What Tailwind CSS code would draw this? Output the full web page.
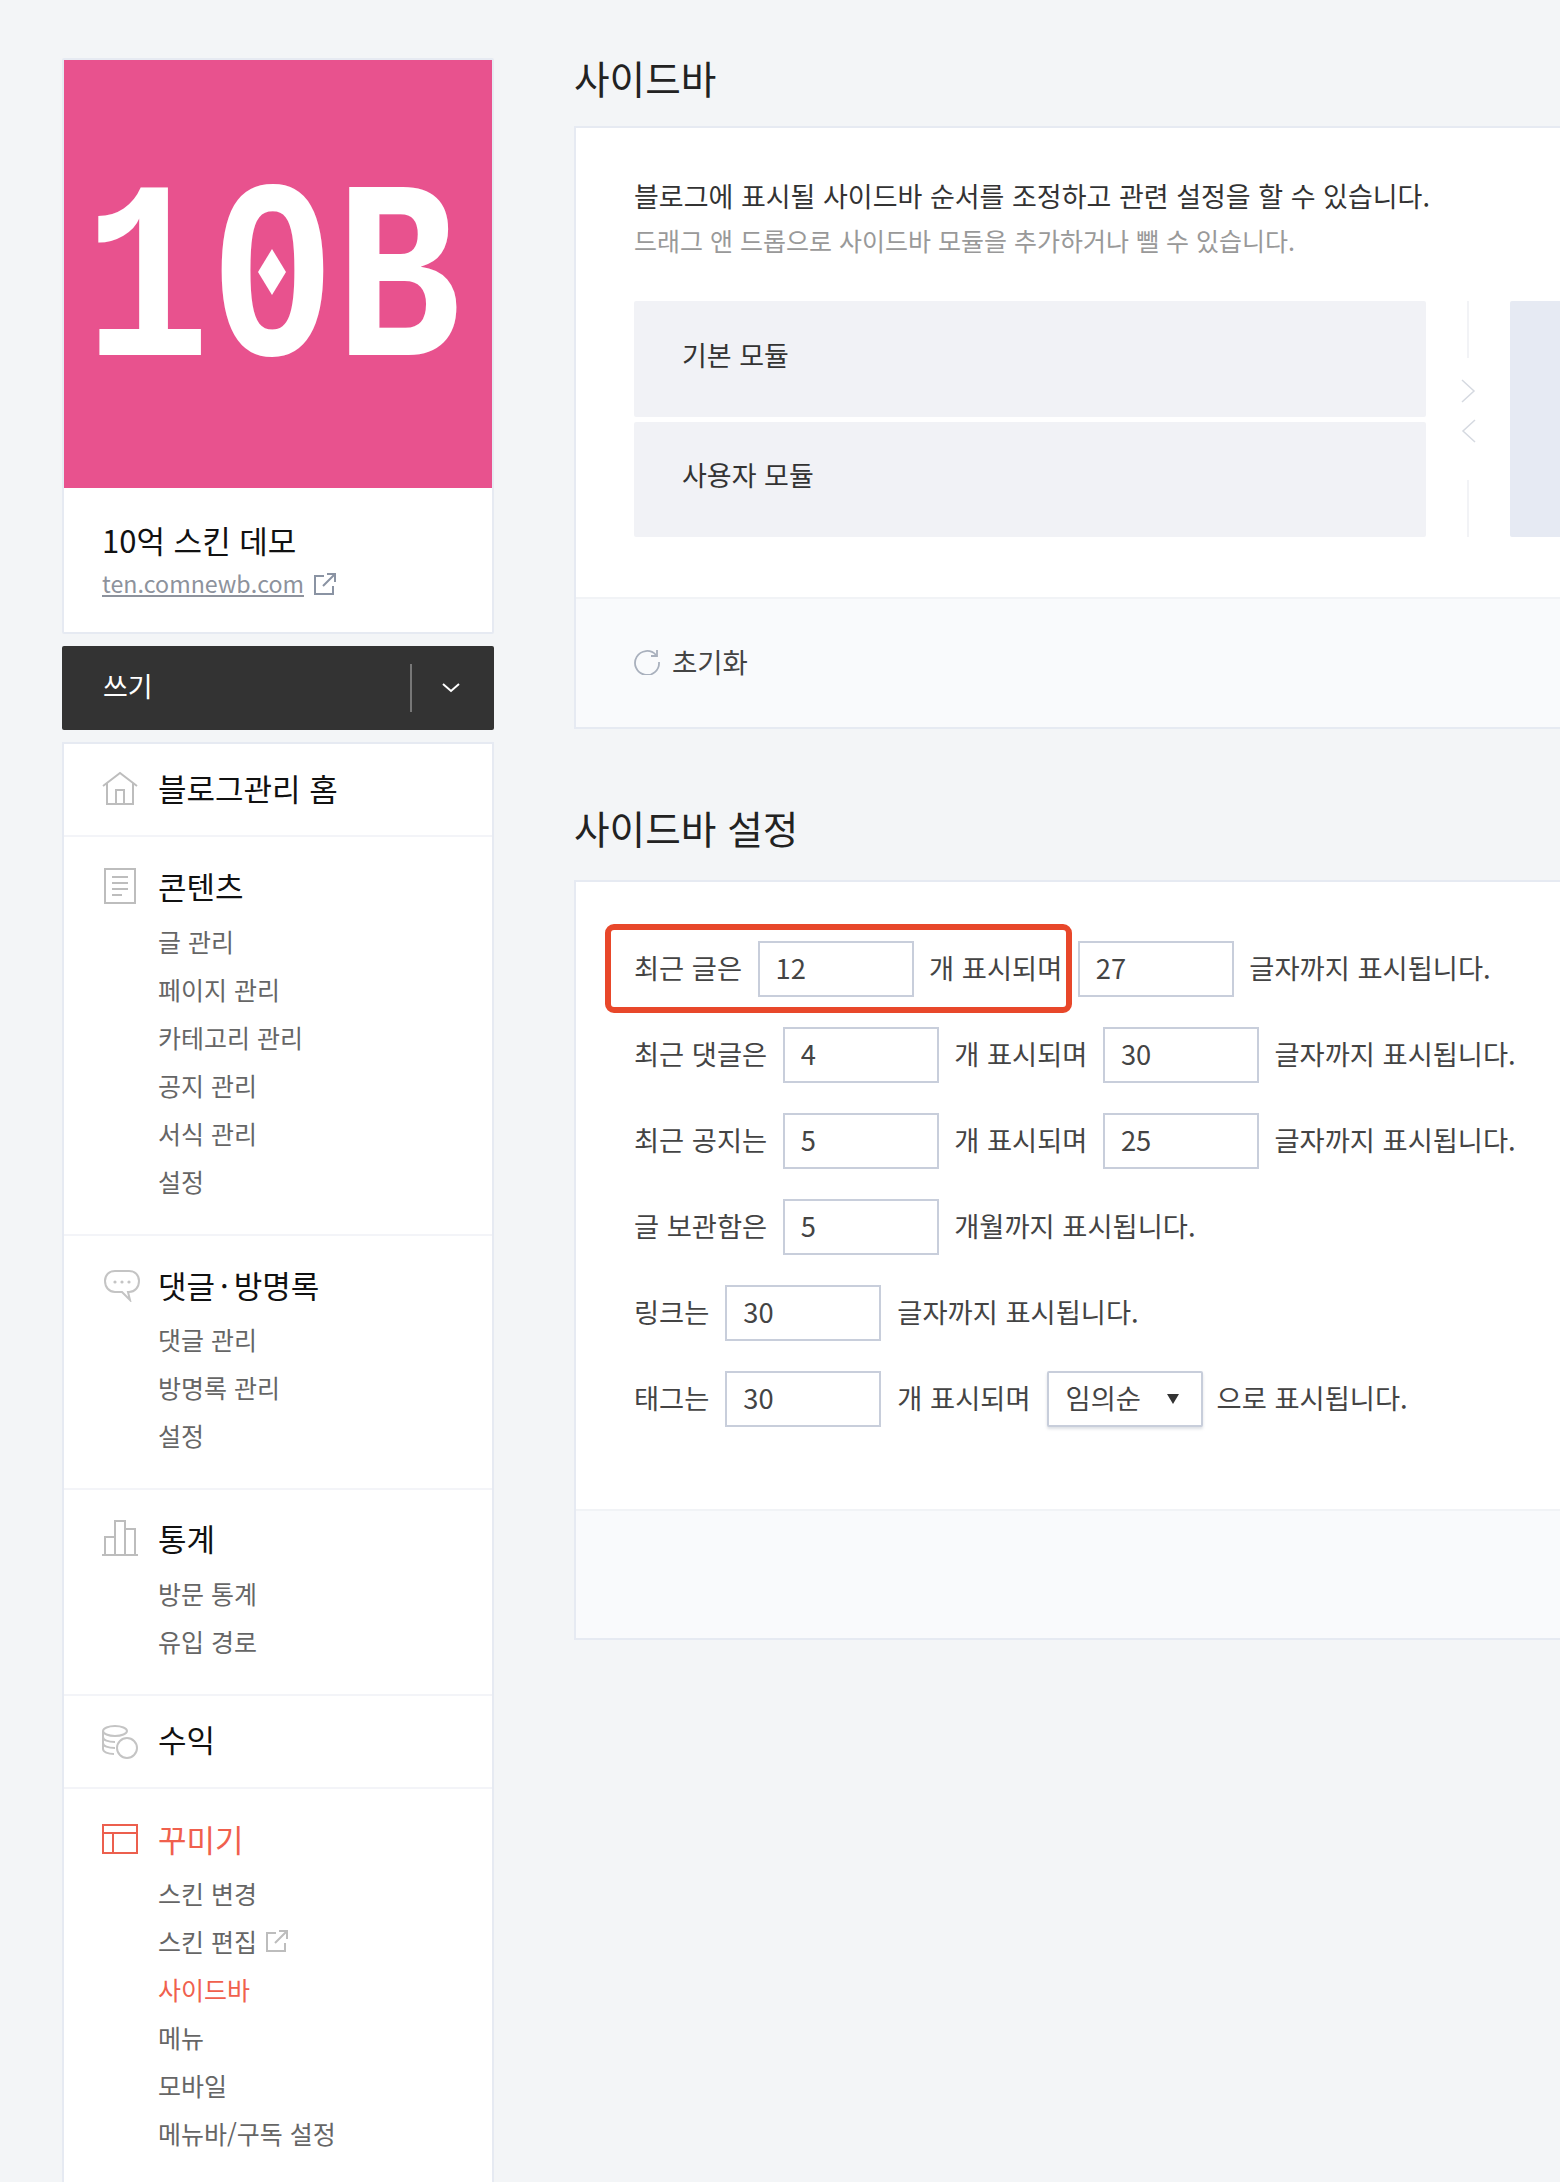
<!DOCTYPE html>
<html lang="ko">
<head>
  <meta charset="UTF-8">
  <title>사이드바</title>
  <script src="https://cdn.jsdelivr.net/npm/@tailwindcss/browser@4"></script>
</head>
<body class="bg-[#f3f5f7] font-['Noto_Sans_CJK_KR',sans-serif] w-[1560px] h-[2182px] overflow-hidden">
  <div class="flex items-start">

    <!-- 왼쪽 메뉴 -->
    <aside class="w-[432px] ml-[62px] pt-[58px] shrink-0">
      <div class="bg-white border-2 border-[#e6eaf2] rounded-[2px]">
        <div class="relative h-[428px] bg-[#e8528e] flex items-center justify-center overflow-hidden">
          <span class="font-['Liberation_Mono',monospace] font-bold text-white text-[255px] leading-none scale-x-[.82] translate-y-[13px] -translate-x-[5px] whitespace-nowrap">10B</span>
          <span class="absolute left-[190px] top-[177px] w-[36px] h-[70px]">
            <svg viewBox="0 0 36 70" class="w-full h-full"><rect width="36" height="70" fill="#e8528e"/><path d="M18 12 32 35 18 58 4 35Z" fill="#fff"/></svg>
          </span>
        </div>
        <div class="h-[144px] pl-[38px] pt-[29px]">
          <div class="text-[31px] leading-[46px] text-[#111]">10억 스킨 데모</div>
          <div class="flex items-center gap-[10px] h-[42px]">
            <span class="text-[23.2px] text-[#8d929c] underline pb-[2px]">ten.comnewb.com</span>
            <svg viewBox="0 0 22 22" class="w-[22px] h-[22px]" fill="none" stroke="#8a93a3" stroke-width="2"><path d="M10 3H1v18h18v-8M9 13 20 2M13 1h8v8"/></svg>
          </div>
        </div>
      </div>

      <div class="mt-[12px] h-[84px] bg-[#333] rounded-[2px] flex items-center pl-[41px] text-white text-[27px]">
        <span class="pb-[3px]">쓰기</span>
        <span class="ml-auto w-[2px] h-[48px] bg-[#777]"></span>
        <span class="w-[82px] pr-[4px] flex justify-center">
          <svg viewBox="0 0 18 10" class="w-[18px] h-[10px]" fill="none" stroke="#fff" stroke-width="2"><path d="m1 1 8 7 8-7"/></svg>
        </span>
      </div>

      <nav class="mt-[12px] bg-white border-2 border-[#e6eaf2]">
        <div class="pl-[38px] pt-[24px] pb-[27px] border-b-2 border-[#f3f4f8]">
          <div class="flex items-center h-[40px]">
            <svg viewBox="0 0 36 34" class="w-[36px] h-[34px] shrink-0" fill="none" stroke="#bdbdbd" stroke-width="2"><path d="M1 15 18 2l17 13M5 12v21h26V12M14 33V19h8v14"/></svg>
            <span class="ml-[20px] text-[31px] text-[#111]">블로그관리 홈</span>
          </div>
        </div>

        <div class="pl-[38px] pt-[29px] pb-[29px] border-b-2 border-[#f3f4f8]">
          <div class="flex items-center h-[40px]">
            <span class="w-[36px] shrink-0 flex justify-center">
              <svg viewBox="0 0 32 36" class="w-[32px] h-[36px]" fill="none" stroke="#bdbdbd" stroke-width="2"><path d="M1 1h30v34H1zM8 9h16M8 15h16M8 21h16M8 27h10"/></svg>
            </span>
            <span class="ml-[20px] text-[31px] text-[#111]">콘텐츠</span>
          </div>
          <ul class="mt-[11px] pl-[56px] text-[25px] text-[#666] leading-[48px]">
            <li>글 관리</li>
            <li>페이지 관리</li>
            <li>카테고리 관리</li>
            <li>공지 관리</li>
            <li>서식 관리</li>
            <li>설정</li>
          </ul>
        </div>

        <div class="pl-[38px] pt-[29px] pb-[29px] border-b-2 border-[#f3f4f8]">
          <div class="flex items-center h-[40px]">
            <span class="w-[36px] shrink-0 flex justify-center">
              <svg viewBox="0 0 36 32" class="w-[36px] h-[32px] ml-[4px] mt-[2px] shrink-0" fill="none" stroke="#c4c4c4" stroke-width="2"><path d="M11 1h14c6 0 10 4 10 10s-4 11-10 11h-1l2 8-8-8H11C5 22 1 17 1 11S5 1 11 1Z"/><circle cx="11" cy="12" r="1.6" fill="#c4c4c4" stroke="none"/><circle cx="18" cy="12" r="1.6" fill="#c4c4c4" stroke="none"/><circle cx="25" cy="12" r="1.6" fill="#c4c4c4" stroke="none"/></svg>
            </span>
            <span class="ml-[20px] text-[31px] text-[#111]">댓글<span class="mx-[5px]">·</span>방명록</span>
          </div>
          <ul class="mt-[10px] pl-[56px] text-[25px] text-[#666] leading-[48px]">
            <li>댓글 관리</li>
            <li>방명록 관리</li>
            <li>설정</li>
          </ul>
        </div>

        <div class="pl-[38px] pt-[28px] pb-[29px] border-b-2 border-[#f3f4f8]">
          <div class="flex items-center h-[40px]">
            <svg viewBox="0 0 36 36" class="w-[36px] h-[36px] shrink-0" fill="none" stroke="#bdbdbd" stroke-width="2"><path d="M0 35h36M3 35V17h10M13 35V1h10v34M23 9h10v26"/></svg>
            <span class="ml-[20px] text-[31px] text-[#111]">통계</span>
          </div>
          <ul class="mt-[11px] pl-[56px] text-[25px] text-[#666] leading-[48px]">
            <li>방문 통계</li>
            <li>유입 경로</li>
          </ul>
        </div>

        <div class="pl-[38px] pt-[23px] pb-[28px] border-b-2 border-[#f3f4f8]">
          <div class="flex items-center h-[40px]">
            <svg viewBox="0 0 36 34" class="w-[36px] h-[34px] shrink-0 mt-[6px]" fill="none" stroke="#c4c4c4" stroke-width="2"><ellipse cx="13" cy="6" rx="12" ry="5"/><path d="M1 6v6c0 3 5 5 12 5M1 12v6c0 3 5 5 12 5M1 18v6c0 3 5 5 11 5"/><circle cx="25" cy="23" r="10" fill="#fff"/></svg>
            <span class="ml-[20px] text-[31px] text-[#111]">수익</span>
          </div>
        </div>

        <div class="pl-[38px] pt-[30px] pb-[28px]">
          <div class="flex items-center h-[40px]">
            <svg viewBox="0 0 36 30" class="w-[36px] h-[30px] shrink-0" fill="none" stroke="#ec5f4e" stroke-width="2"><path d="M1 1h34v28H1zM1 9h34M11 9v20"/></svg>
            <span class="ml-[20px] text-[31px] text-[#f0604d]">꾸미기</span>
          </div>
          <ul class="mt-[10px] pl-[56px] text-[25px] text-[#666] leading-[48px]">
            <li>스킨 변경</li>
            <li class="flex items-center gap-[9px]">스킨 편집
              <svg viewBox="0 0 22 22" class="w-[22px] h-[22px]" fill="none" stroke="#bdbdbd" stroke-width="2"><path d="M10 3H1v18h18v-8M9 13 20 2M13 1h8v8"/></svg>
            </li>
            <li class="text-[#f0604d]">사이드바</li>
            <li>메뉴</li>
            <li>모바일</li>
            <li>메뉴바/구독 설정</li>
          </ul>
        </div>
      </nav>
    </aside>

    <!-- 본문 -->
    <main class="ml-[80px] w-[1100px] shrink-0 pt-[50px] text-[#444]">
      <h2 class="h-[56px] pb-[2px] flex items-center text-[38.7px] text-[#222]">사이드바</h2>
      <section class="mt-[20px] bg-white border-2 border-[#e6eaf2]">
        <div class="pl-[58px] pt-[45px] pb-[60px]">
          <p class="text-[27px] leading-[45px] text-[#333]">블로그에 표시될 사이드바 순서를 조정하고 관련 설정을 할 수 있습니다.</p>
          <p class="text-[25px] leading-[45px] text-[#999]">드래그 앤 드롭으로 사이드바 모듈을 추가하거나 뺄 수 있습니다.</p>
          <div class="mt-[38px] flex h-[236px]">
            <div class="w-[792px] grid grid-rows-2 gap-[5px] shrink-0">
              <div class="bg-[#f1f2f6] rounded-[2px] pl-[48px] pt-[32px] text-[27px] leading-[44px] text-[#333]">기본 모듈</div>
              <div class="bg-[#f1f2f6] rounded-[2px] pl-[48px] pt-[31px] text-[27px] leading-[44px] text-[#333]">사용자 모듈</div>
            </div>
            <div class="w-[84px] shrink-0 flex flex-col items-center">
              <span class="w-[2px] h-[57px] bg-[#f2f3f6]"></span>
              <svg viewBox="0 0 15 24" class="w-[15px] h-[24px] mt-[21px]" fill="none" stroke="#d5d9e0" stroke-width="1.5"><path d="m1 1 12 11L1 23"/></svg>
              <svg viewBox="0 0 15 24" class="w-[15px] h-[24px] mt-[16px]" fill="none" stroke="#d5d9e0" stroke-width="1.5"><path d="M14 1 2 12l12 11"/></svg>
              <span class="w-[2px] h-[57px] bg-[#f2f3f6] mt-auto"></span>
            </div>
            <div class="flex-1 bg-[#e6eaf3] rounded-[2px]"></div>
          </div>
        </div>
        <div class="h-[130px] bg-[#f9fafc] border-t-2 border-[#f1f3f6] pl-[58px] pb-[2px] flex items-center gap-[12px]">
          <svg viewBox="0 0 26 26" class="w-[26px] h-[26px]" fill="none" stroke="#a9b0bd" stroke-width="1.8"><path d="M22 6A12 12 0 1 0 25 13"/><path d="M23 1v6h-6"/></svg>
          <span class="text-[27.5px] text-[#444]">초기화</span>
        </div>
      </section>

      <h2 class="mt-[72px] h-[56px] pb-[4px] flex items-center text-[38.7px] text-[#222]">사이드바 설정</h2>
      <section class="mt-[23px] bg-white border-2 border-[#e6eaf2]">
        <div class="pl-[58px] pt-[59px] pb-[82px] flex flex-col gap-[30px] text-[27.3px]">
          <div class="relative flex items-center gap-[15.5px] h-[56px]">
            <span class="pb-[3px]">최근 글은</span>
            <input type="text" value="12" class="w-[156px] h-[56px] border-2 border-[#c8cedb] pl-[16px] pb-[4px] outline-none text-[#444]">
            <span class="pb-[3px]">개 표시되며</span>
            <input type="text" value="27" class="w-[156px] h-[56px] border-2 border-[#c8cedb] pl-[16px] pb-[4px] outline-none text-[#444]">
            <span class="pb-[3px]">글자까지 표시됩니다.</span>
            <span class="absolute -left-[29px] -top-[17px] w-[467px] h-[89px] border-[6px] border-[#e8472a] rounded-[9px]"></span>
          </div>
          <div class="flex items-center gap-[15.5px] h-[56px]">
            <span class="pb-[3px]">최근 댓글은</span>
            <input type="text" value="4" class="w-[156px] h-[56px] border-2 border-[#c8cedb] pl-[16px] pb-[4px] outline-none text-[#444]">
            <span class="pb-[3px]">개 표시되며</span>
            <input type="text" value="30" class="w-[156px] h-[56px] border-2 border-[#c8cedb] pl-[16px] pb-[4px] outline-none text-[#444]">
            <span class="pb-[3px]">글자까지 표시됩니다.</span>
          </div>
          <div class="flex items-center gap-[15.5px] h-[56px]">
            <span class="pb-[3px]">최근 공지는</span>
            <input type="text" value="5" class="w-[156px] h-[56px] border-2 border-[#c8cedb] pl-[16px] pb-[4px] outline-none text-[#444]">
            <span class="pb-[3px]">개 표시되며</span>
            <input type="text" value="25" class="w-[156px] h-[56px] border-2 border-[#c8cedb] pl-[16px] pb-[4px] outline-none text-[#444]">
            <span class="pb-[3px]">글자까지 표시됩니다.</span>
          </div>
          <div class="flex items-center gap-[15.5px] h-[56px]">
            <span class="pb-[3px]">글 보관함은</span>
            <input type="text" value="5" class="w-[156px] h-[56px] border-2 border-[#c8cedb] pl-[16px] pb-[4px] outline-none text-[#444]">
            <span class="pb-[3px]">개월까지 표시됩니다.</span>
          </div>
          <div class="flex items-center gap-[16px] h-[56px]">
            <span class="pb-[3px]">링크는</span>
            <input type="text" value="30" class="w-[156px] h-[56px] border-2 border-[#c8cedb] pl-[16px] pb-[4px] outline-none text-[#444]">
            <span class="pb-[3px]">글자까지 표시됩니다.</span>
          </div>
          <div class="flex items-center gap-[16px] h-[56px]">
            <span class="pb-[3px]">태그는</span>
            <input type="text" value="30" class="w-[156px] h-[56px] border-2 border-[#c8cedb] pl-[16px] pb-[4px] outline-none text-[#444]">
            <span class="pb-[3px]">개 표시되며</span>
            <div class="relative w-[156px] h-[56px] -mr-[2px]">
              <select class="appearance-none w-full h-full border-2 border-[#c8cedb] rounded-[2px] pl-[17px] pb-[4px] bg-white shadow-[0_2px_3px_rgba(120,130,150,0.25)] outline-none">
                <option>임의순</option>
              </select>
              <svg viewBox="0 0 12 10" class="absolute right-[24px] top-[23px] w-[12px] h-[10px]"><path d="M0 0h12L6 10Z" fill="#333"/></svg>
            </div>
            <span class="pb-[3px]">으로 표시됩니다.</span>
          </div>
        </div>
        <div class="h-[129px] bg-[#f9fafc] border-t-2 border-[#f1f3f6]"></div>
      </section>
    </main>
  </div>
</body>
</html>
